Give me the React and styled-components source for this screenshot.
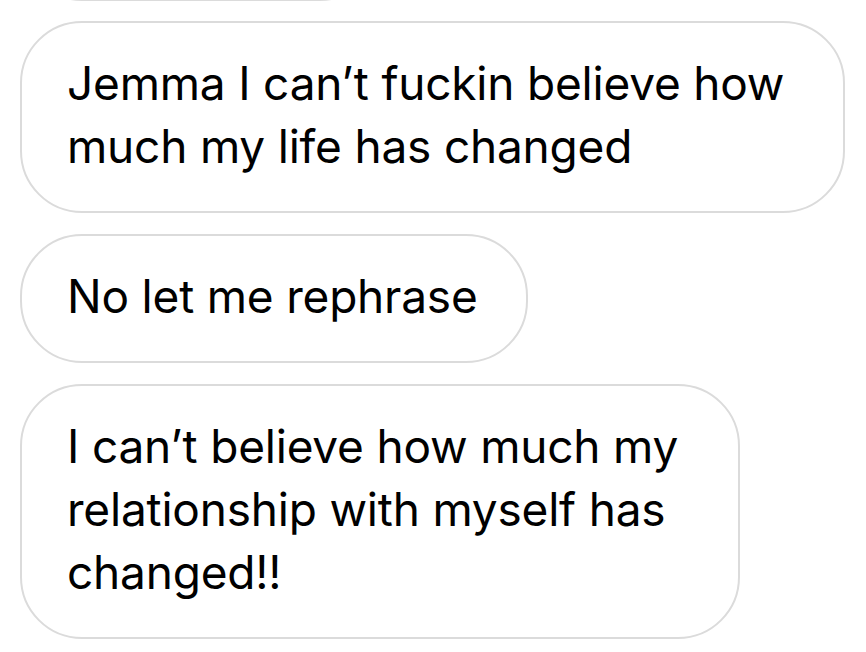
import React from 'react'
import styled, { createGlobalStyle } from 'styled-components'

const GlobalStyle = createGlobalStyle`
  html, body {
    margin: 0;
    padding: 0;
    background: #ffffff;
  }
  body {
    width: 866px;
    height: 652px;
    overflow: hidden;
    font-family: Inter, "Noto Sans", "Liberation Sans", sans-serif;
    -webkit-font-smoothing: antialiased;
  }
`

const Thread = styled.div`
  display: flex;
  flex-direction: column;
  align-items: flex-start;
  gap: 21px;
  padding: 0 0 0 20px;
  height: 652px;
  overflow: hidden;
  box-sizing: border-box;
`

const Bubble = styled.div`
  box-sizing: border-box;
  flex-shrink: 0;
  border: 2px solid #dbdbdb;
  border-radius: 62px;
  background: #ffffff;
  padding: 29px 46px 33px 45px;
  color: #000000;
  font-size: 46px;
  line-height: 63px;
  letter-spacing: -0.2px;
  min-width: ${p => p.$minWidth || 0}px;
`

// the previous message, scrolled almost out of view
const PrevBubble = styled(Bubble)`
  height: 129px;
  margin-top: -128px;
  margin-bottom: -1px;
`

const Line = styled.span`
  display: block;
  white-space: nowrap;
`

const messages = [
  { id: 1, lines: ['Jemma I can’t fuckin believe how', 'much my life has changed'], minWidth: 825 },
  { id: 2, lines: ['No let me rephrase'], minWidth: 508 },
  { id: 3, lines: ['I can’t believe how much my', 'relationship with myself has', 'changed!!'], minWidth: 720 }
]

export default function App () {
  return (
    <>
      <GlobalStyle />
      <Thread>
        <PrevBubble $minWidth={362} aria-hidden='true' />
        {messages.map(msg => (
          <Bubble key={msg.id} $minWidth={msg.minWidth}>
            {msg.lines.map(line => (
              <Line key={line}>{line}</Line>
            ))}
          </Bubble>
        ))}
      </Thread>
    </>
  )
}
